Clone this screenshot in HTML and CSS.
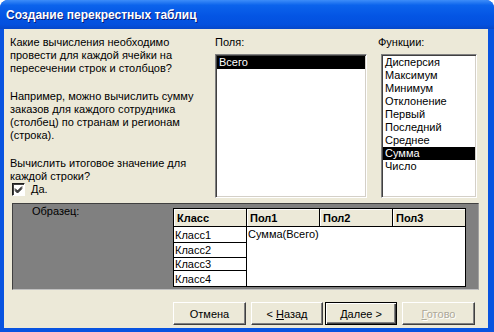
FILE: index.html
```html
<!DOCTYPE html>
<html lang="ru">
<head>
  <meta charset="UTF-8" />
  <meta name="viewport" content="width=device-width, initial-scale=1.0"/>
  <title>Создание перекрестных таблиц</title>
  <link rel="stylesheet" href="styles.css">
</head>
<body>

  <div class="window">
    <div class="titlebar">Создание перекрестных таблиц</div>

    <div class="client">
      <div class="top">
        <div class="intro">
          <p>Какие вычисления необходимо провести для каждой ячейки на пересечении строк и столбцов?</p>
          <p>Например, можно вычислить сумму заказов для каждого сотрудника (столбец) по странам и регионам (строка).</p>
          <p class="last">Вычислить итоговое значение для каждой строки?</p>
          <label class="check">
            <span class="box">
              <svg width="9" height="9" viewBox="0 0 9 9"><path d="M1 3.5 L3.5 6 L8 1.5 M1 4.5 L3.5 7 L8 2.5 M1 5.5 L3.5 8 L8 3.5" stroke="#000" stroke-width="1" fill="none"/></svg>
            </span>
            <span><u>Д</u>а.</span>
          </label>
        </div>

        <div class="fields">
          <div class="caption">Поля:</div>
          <ul class="listbox">
            <li class="selected">Всего</li>
          </ul>
        </div>

        <div class="funcs">
          <div class="caption">Функции:</div>
          <ul class="listbox">
            <li>Дисперсия</li>
            <li>Максимум</li>
            <li>Минимум</li>
            <li>Отклонение</li>
            <li>Первый</li>
            <li>Последний</li>
            <li>Среднее</li>
            <li class="selected">Сумма</li>
            <li>Число</li>
          </ul>
        </div>
      </div>

      <div class="sample">
        <div class="sample-label">Образец:</div>
        <table class="sample-table">
          <tr class="head">
            <th>Класс</th>
            <th>Пол1</th>
            <th>Пол2</th>
            <th>Пол3</th>
          </tr>
          <tr class="r1">
            <td>Класс1</td>
            <td class="values" colspan="3" rowspan="4">Сумма(Всего)</td>
          </tr>
          <tr class="r2"><td>Класс2</td></tr>
          <tr class="r3"><td>Класс3</td></tr>
          <tr class="r4"><td>Класс4</td></tr>
        </table>
      </div>

      <div class="buttons">
        <button class="btn cancel">Отмена</button>
        <button class="btn back">&lt; <u>Н</u>азад</button>
        <button class="btn next default"><u>Д</u>алее &gt;</button>
        <button class="btn finish" disabled><u>Г</u>отово</button>
      </div>
    </div>
  </div>

</body>
</html>
```

FILE: styles.css
```css
body {
  margin: 0;
  background-color: #ffffff;
  font-family: 'Liberation Sans', Arial, sans-serif;
  font-size: 11px;
  color: #000;
}
.window {
  width: 494px;
  height: 332px;
  background-color: #0853e0;
  border-radius: 8px 8px 0 0;
  overflow: hidden;
}
.titlebar {
  height: 29px;
  line-height: 31px;
  padding-left: 6px;
  box-sizing: border-box;
  color: #fff;
  font-weight: bold;
  font-size: 12px;
  text-shadow: 1px 1px #0a1b7a;
  background: linear-gradient(#3d8df9 0%, #0b63ec 18%, #0455e4 55%, #0350de 85%, #0647c9 100%);
}
.client {
  height: 299px;
  margin: 0 6px 0 4px;
  padding: 7px 11px 0 6px;
  box-sizing: border-box;
  background-color: #ece9d8;
}
.top {
  display: flex;
  height: 162px;
}
.intro {
  width: 200px;
  margin-right: 5px;
  line-height: 13px;
}
.intro p {
  margin: 0 0 15px 0;
}
.intro p.last {
  margin-bottom: 0;
}
.check {
  display: flex;
  align-items: center;
  gap: 6px;
  padding-left: 2px;
}
.check .box {
  width: 11px;
  height: 11px;
  border: 1px solid #1c1c1c;
  border-right-color: #fff;
  border-bottom-color: #fff;
  box-shadow: inset 1px 1px #404040;
  background: #fff;
  display: flex;
  align-items: center;
  justify-content: center;
}
.fields {
  width: 152px;
  margin-right: 11px;
}
.funcs {
  width: 99px;
}
.caption {
  height: 13px;
  line-height: 13px;
  margin-bottom: 5px;
}
.listbox {
  list-style: none;
  margin: 0;
  padding: 1px;
  height: 144px;
  box-sizing: border-box;
  background: #fff;
  border: 1px solid #808080;
  border-right-color: #fff;
  border-bottom-color: #fff;
  box-shadow: inset 1px 1px #404040, inset -1px -1px #d4d0c8;
}
.funcs .listbox {
  margin-left: 3px;
  width: 96px;
}
.listbox li {
  height: 13px;
  line-height: 13px;
  padding-left: 2px;
  white-space: nowrap;
}
.listbox li.selected {
  background: #000;
  color: #fff;
}
.sample {
  display: flex;
  width: 467px;
  height: 87px;
  margin: 5px 0 0 2px;
  padding: 0 0 0 19px;
  box-sizing: border-box;
  background: #808080;
  border: 1px solid #404040;
  border-right-color: #a0a0a0;
  border-bottom-color: #c0c0c0;
}
.sample-label {
  width: 141px;
  line-height: 13px;
  padding-top: 1px;
}
.sample-table {
  margin-top: 4px;
  border-collapse: collapse;
  height: 78px;
}
.sample-table th,
.sample-table td {
  border: 1px solid #000;
  padding: 0 0 0 1px;
  text-align: left;
  vertical-align: middle;
  white-space: nowrap;
}
.sample-table th {
  width: 69px;
  height: 17px;
  background: #ece9d8;
  font-weight: bold;
  padding-left: 3px;
  box-shadow: inset 1px 1px #fff;
}
.sample-table td {
  background: #fff;
}
.sample-table .values {
  vertical-align: top;
  padding-top: 1px;
}
.r1 td:first-child { height: 15px; }
.r2 td { height: 14px; }
.r3 td { height: 11px; }
.r4 td { height: 15px; }
.buttons {
  display: flex;
  justify-content: flex-end;
  margin-top: 12px;
  padding-right: 2px;
}
.btn {
  height: 23px;
  width: 73px;
  padding: 0;
  font-family: inherit;
  font-size: 11px;
  color: #000;
  background: #ece9d8;
  border: 1px solid #fff;
  border-right-color: #404040;
  border-bottom-color: #404040;
  box-shadow: inset -1px -1px #808080;
}
.btn.back,
.btn.next {
  width: 72px;
}
.btn.back {
  margin-left: 5px;
}
.btn.next {
  margin-left: 2px;
}
.btn.finish {
  margin-left: 5px;
  color: #aca899;
  text-shadow: 1px 1px #fff;
}
.btn.default {
  border: 1px solid #000;
  box-shadow: inset 1px 1px #fff, inset -1px -1px #404040, inset -2px -2px #808080;
}
```
